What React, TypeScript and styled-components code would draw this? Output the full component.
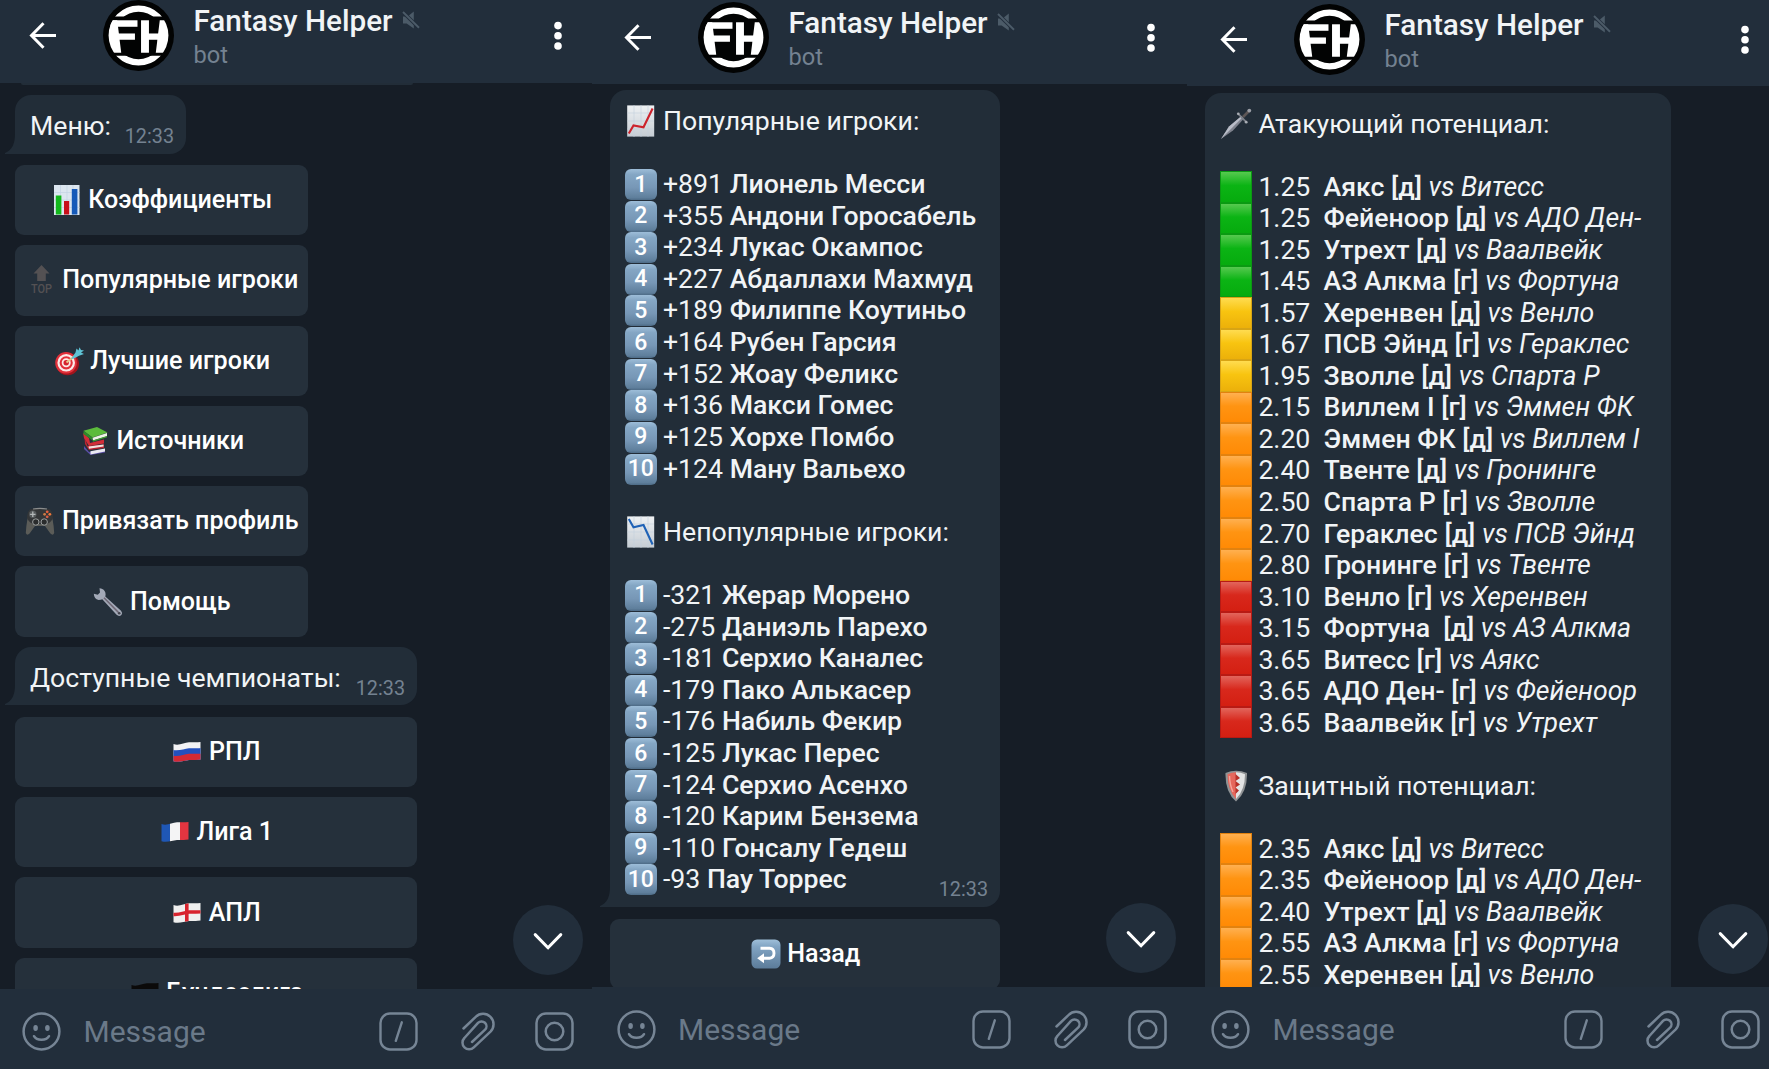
import React from "react";
import styled, { createGlobalStyle, css } from "styled-components";

const color = {
  chat: "#161d26",
  bar: "#222e3b",
  bubble: "#222d38",
  button: "#25303b",
  text: "#f1f4f6",
  muted: "#748291",
  icon: "#768595",
};

const Global = createGlobalStyle`
  * { box-sizing: border-box; }
  body { margin: 0; background: ${color.chat}; overflow: hidden; }
`;

/* ---------- layout ---------- */

const Screens = styled.main`
  display: grid;
  grid-template-columns: 592px 595px 582px;
  width: 1769px;
  height: 1069px;
  font-family: Roboto, "Noto Sans", sans-serif;
  color: ${color.text};
`;

const Phone = styled.section`
  display: flex;
  flex-direction: column;
  height: 1069px;
  min-width: 0;
  background: ${color.chat};
`;

const Header = styled.header<{ $h: number; $top: number; $inset: number; $right: number }>`
  display: flex;
  flex: none;
  align-items: flex-start;
  height: ${(p) => p.$h}px;
  padding: ${(p) => `${p.$top}px ${p.$right}px 0 ${p.$inset}px`};
  background: ${color.bar};
  svg { flex: none; display: block; }
`;

const BackArrow = styled.svg`
  margin-top: 21px;
`;

const Avatar = styled.svg`
  margin-left: 46px;
`;

const Who = styled.div`
  margin: 3.5px 0 0 19.5px;
  flex: 1;
`;

const TitleRow = styled.div`
  display: flex;
  align-items: flex-start;
`;

const Title = styled.h1`
  margin: 0;
  width: 200px;
  font-size: 29.7px;
  line-height: 34px;
  font-weight: 500;
  white-space: nowrap;
`;

const MuteIcon = styled.svg`
  margin: 7.5px 0 0 8px;
`;

const Status = styled.div`
  margin-top: 3.2px;
  font-size: 23.6px;
  line-height: 28px;
  color: ${color.muted};
`;

const Dots = styled.svg`
  margin-top: 21px;
`;

const Chat = styled.div<{ $left: number; $top?: number }>`
  position: relative;
  display: flex;
  flex-direction: column;
  align-items: flex-start;
  flex: 1;
  min-height: 0;
  overflow: hidden;
  padding: ${(p) => `${p.$top ?? 0}px 0 0 ${p.$left}px`};
`;

const PreviousEdge = styled.div`
  flex: none;
  width: 392px;
  height: 2px;
  margin: 0 0 10px 6px;
  border-radius: 0 0 4px 4px;
  background: ${color.bubble};
`;

const BubbleBox = styled.div<{ $w: number; $tail: boolean }>`
  position: relative;
  flex: none;
  width: ${(p) => p.$w}px;
  padding: 15px 12px 12px 15px;
  border-radius: ${(p) => (p.$tail ? "16px 16px 16px 0" : "16px 16px 0 0")};
  background: ${color.bubble};
`;

const TailShape = styled.svg`
  position: absolute;
  left: -10px;
  bottom: 0;
`;

const Line = styled.div<{ $h?: number }>`
  display: flex;
  align-items: center;
  height: ${(p) => p.$h ?? 31.62}px;
  font-size: 26.65px;
  line-height: ${(p) => p.$h ?? 31.62}px;
  white-space: pre;
  b { font-weight: 500; }
`;

const LineText = styled.span`
  margin: 1.6px 0 0;
`;

const Mark = styled.span`
  display: flex;
  flex: none;
  width: 32px;
  margin-right: 6px;
  svg { display: block; }
`;

const Time = styled.time`
  align-self: flex-end;
  margin: 0 0 -5.2px auto;
  font-size: 19.8px;
  line-height: 20px;
  color: ${color.muted};
`;

const KeycapBox = styled.span`
  display: flex;
  align-items: center;
  justify-content: center;
  width: 31.5px;
  height: 31px;
  margin-top: 1px;
  border-radius: 6px;
  background: linear-gradient(#9dbdd8 0, #84a6c4 18%, #7797b6 60%, #5f7f9c 92%, #4d6b86 100%);
  color: #fff;
  font-size: 23px;
  line-height: 30px;
  font-weight: 500;
`;

const Square = styled.span<{ $tone: Tone }>`
  width: 32px;
  height: 31.6px;
  ${(p) => {
    const [edge, top, mid, bottom] = squares[p.$tone];
    return css`
      border: 1px solid ${edge};
      background: linear-gradient(${top}, ${mid} 45%, ${bottom});
    `;
  }}
`;

const Keyboard = styled.div<{ $w: number }>`
  display: flex;
  flex: none;
  flex-direction: column;
  gap: 10px;
  width: ${(p) => p.$w}px;
  margin: 11.4px 0 10px;
`;

const Key = styled.button`
  display: flex;
  align-items: center;
  justify-content: center;
  gap: 6.5px;
  height: 70.3px;
  padding: 0 0 0 1px;
  border: 0;
  border-radius: 9px;
  background: ${color.button};
  color: #fff;
  font-family: inherit;
  font-size: 25.1px;
  font-weight: 500;
  line-height: 30px;
  white-space: nowrap;
  svg { flex: none; display: block; }
`;

const Fab = styled.button<{ $x: number; $bottom: number }>`
  position: absolute;
  left: ${(p) => p.$x}px;
  bottom: ${(p) => p.$bottom}px;
  display: flex;
  align-items: center;
  justify-content: center;
  width: 70px;
  height: 70px;
  padding: 2px 0 0;
  border: 0;
  border-radius: 50%;
  background: ${color.bar};
`;

const Composer = styled.footer<{ $h: number; $inset: number; $right: number; $top: number }>`
  display: flex;
  flex: none;
  align-items: center;
  height: ${(p) => p.$h}px;
  padding: ${(p) => `${p.$top}px ${p.$right}px 0 ${p.$inset}px`};
  background: ${color.bar};
  svg { flex: none; display: block; }
`;

const Placeholder = styled.span`
  flex: 1;
  margin: 2px 0 0 22.5px;
  font-size: 30px;
  line-height: 34px;
  color: #6a7989;
`;

const ComposerTools = styled.div`
  display: flex;
  align-items: center;
  svg:nth-child(2) { margin: 0 39.5px 0 43px; }
`;

/* ---------- icons ---------- */

const Logo = ({ id }: { id: string }) => (
  <Avatar width="71" height="71" viewBox="0 0 70 70">
    <defs>
      <clipPath id={`${id}-disc`}><circle cx="35" cy="35" r="29.5" /></clipPath>
      <clipPath id={`${id}-caps`}><path d="M0 0H70V16.2H0ZM0 55H70V70H0Z" /></clipPath>
    </defs>
    <circle cx="35" cy="35" r="35" fill="#020303" />
    <circle cx="35" cy="35" r="26.6" fill="none" stroke="#fff" strokeWidth="6.2" clipPath={`url(#${id}-caps)`} />
    <g clipPath={`url(#${id}-disc)`} fill="#fff">
      <rect x="6" y="20" width="28" height="6.4" />
      <rect x="12" y="33" width="19.5" height="6.2" />
      <g transform="translate(11 36) skewX(7)"><rect x="-6.5" y="-16" width="11.5" height="32" /></g>
      <rect x="37.5" y="20" width="7.8" height="32" />
      <rect x="44" y="33" width="14" height="6.2" />
      <g transform="translate(59 36) skewX(-7)"><rect x="-5" y="-16" width="11.5" height="32" /></g>
    </g>
  </Avatar>
);

const Back = () => (
  <BackArrow width="28" height="29" viewBox="0 0 28 29" fill="none" stroke="#fff" strokeWidth="3">
    <path d="M27 14.5H3M14.5 2.3L2.5 14.5L14.5 26.7" />
  </BackArrow>
);

const Muted = () => (
  <MuteIcon width="18" height="18" viewBox="0 0 18 18" fill="#4c5b68">
    <path d="M1 5.6V12.4H4.6L11.8 17.6V.6L6.3 5L5 5.6Z" />
    <path d="M0 .2L17.6 17.4" stroke={color.bar} strokeWidth="3.6" />
    <path d="M1 1L17 16.8" stroke="#4c5b68" strokeWidth="1.9" />
  </MuteIcon>
);

const More = () => (
  <Dots width="10" height="30" viewBox="0 0 10 30" fill="#fff">
    <circle cx="5" cy="4.6" r="3.8" />
    <circle cx="5" cy="14.8" r="3.8" />
    <circle cx="5" cy="25" r="3.8" />
  </Dots>
);

const Smile = () => (
  <svg width="39" height="39" viewBox="0 0 39 39" fill="none" stroke={color.icon} strokeWidth="2.5" strokeLinecap="round">
    <circle cx="19.5" cy="19.5" r="17.9" />
    <path d="M12 24.2C14.6 29 24.4 29 27 24.2" />
    <ellipse cx="13.6" cy="16" rx="2.3" ry="3" fill={color.icon} stroke="none" />
    <ellipse cx="25.4" cy="16" rx="2.3" ry="3" fill={color.icon} stroke="none" />
  </svg>
);

const Commands = () => (
  <svg width="39" height="39" viewBox="0 0 39 39" fill="none" stroke={color.icon} strokeWidth="2.4" strokeLinecap="round">
    <rect x="1.5" y="1.5" width="36" height="36" rx="9.5" />
    <path d="M22.8 10.3L16.8 28.8" />
  </svg>
);

const Clip = () => (
  <svg width="35" height="39" viewBox="0 0 35 39" fill="none" stroke={color.icon} strokeWidth="2.5" strokeLinecap="round" strokeLinejoin="round">
    <path d="M2.5 16.5L14.7 4.9A10.3 10.3 0 0 1 29.5 19.6L12.8 35.3A6.6 6.6 0 0 1 3.4 26L17 10.9A4.9 4.9 0 0 1 24.1 17.7L11 30" />
  </svg>
);

const Camera = () => (
  <svg width="39" height="39" viewBox="0 0 39 39" fill="none" stroke={color.icon} strokeWidth="2.5">
    <rect x="1.5" y="1.5" width="36" height="36" rx="9.5" />
    <circle cx="19.5" cy="19.5" r="8.8" />
  </svg>
);

const Down = () => (
  <svg width="30" height="20" viewBox="0 0 30 20" fill="none" stroke="#fff" strokeWidth="3" strokeLinecap="round" strokeLinejoin="round">
    <path d="M2.2 3.6L15 16.8L27.8 3.6" />
  </svg>
);

const Tail = () => (
  <TailShape width="11" height="20" viewBox="0 0 11 20">
    <path d="M11 0H10C10 10 7 16 0 19V20H11Z" fill={color.bubble} />
  </TailShape>
);

/* ---------- emoji drawings ---------- */

const BarChart = () => (
  <svg width="30" height="30" viewBox="0 0 30 30">
    <rect x="2" y="0" width="25.5" height="30" fill="#dce6f0" />
    <path d="M2 7.5H27.5M2 15H27.5M2 22.5H27.5M8.5 0V30M15 0V30M21 0V30" stroke="#c3d3e4" strokeWidth=".7" />
    <rect x="3.8" y="10.5" width="5.6" height="19" fill="#12b81c" />
    <rect x="12" y="16" width="5.2" height="13.5" fill="#c70f1a" />
    <rect x="19.8" y="4" width="5.6" height="25.5" fill="#1559b8" />
  </svg>
);

const TopArrow = () => (
  <svg width="30" height="30" viewBox="0 0 30 30" fill="#545153">
    <path d="M15.5 0L23.5 8.6H19.8V16H11.2V8.6H7.5Z" />
    <text x="15.5" y="27.6" textAnchor="middle" textLength="21" lengthAdjust="spacingAndGlyphs" fontFamily="Roboto, sans-serif" fontSize="12.8" fontWeight="500">TOP</text>
  </svg>
);

const Target = () => (
  <svg width="30" height="30" viewBox="0 0 30 30">
    <ellipse cx="13.5" cy="18" rx="11.5" ry="11.2" fill="#a3141c" />
    <circle cx="12" cy="16.8" r="10.8" fill="#e1303a" />
    <circle cx="12.2" cy="16.8" r="7.7" fill="none" stroke="#fbe9e7" strokeWidth="2.2" />
    <circle cx="12.2" cy="16.8" r="3.6" fill="#d5232e" stroke="#fbe9e7" strokeWidth="1.8" />
    <path d="M12.5 16.5L22 9" stroke="#e6c98b" strokeWidth="2" />
    <path d="M17 13L21.5 6.6L22.5 2.5L24.5 4.5L25.5 1.2L27 4L30 4.5L27 6.5L30 8L25 9.8L20 12.4Z" fill="#5fc3d6" />
  </svg>
);

const Books = () => (
  <svg width="30" height="30" viewBox="0 0 30 30">
    <path d="M4 20L9 26L25 23V26.5L10.5 29L4 23Z" fill="#5b4fa8" />
    <path d="M10.5 25.2L25 22.6V25.6L10.5 28.4Z" fill="#e9e9f2" />
    <path d="M4.5 11L7.5 20L24 18.5V22L9 24L5 18Z" fill="#bf2431" />
    <path d="M8.5 20.4L23.5 18.4V20.4L9 22.8Z" fill="#f3dfdd" />
    <path d="M3 7L9 12L10 17L24 13.5V17.5L9 20L4 12Z" fill="#d22d38" />
    <path d="M3.5 4.8L17 1L27.5 6.6L12.5 11.6Z" fill="#5cbb3c" />
    <path d="M3.5 4.8L12.5 11.6V14.6L3.5 8Z" fill="#2f8a2a" />
    <path d="M12.5 11.8L27 7V10.2L13 14.6Z" fill="#eef2e8" />
    <path d="M12.5 14.4L27 9.9V11.2L13 15.7Z" fill="#3f9e32" />
  </svg>
);

const Gamepad = () => (
  <svg width="30" height="30" viewBox="0 0 30 30">
    <path d="M5 6Q1.6 12 .8 27Q2 30 4.6 27.5L10 20H20L25.4 27.5Q28 30 29.2 27Q28.4 12 25 6Z" fill="#5b5c58" />
    <path d="M5 3.2Q15 1.4 25 3.2Q29 7 27.5 13Q25 18 20 18H10Q5 18 2.5 13Q1 7 5 3.2Z" fill="#343638" />
    <path d="M8 3Q15 1.8 22 3" stroke="#8b8d8d" strokeWidth="1.2" fill="none" />
    <circle cx="7.8" cy="8.3" r="3.7" fill="#55595b" />
    <path d="M7.8 5.6V11M5.1 8.3H10.5" stroke="#b3b7b8" strokeWidth="1.3" />
    <circle cx="22.2" cy="5.8" r="1.4" fill="#e5603c" />
    <circle cx="19.6" cy="8.3" r="1.4" fill="#cf7a44" />
    <circle cx="24.8" cy="8.3" r="1.4" fill="#f0773b" />
    <circle cx="22.2" cy="10.8" r="1.4" fill="#d95c45" />
    <circle cx="10.8" cy="16" r="3.2" fill="#2a2c2d" stroke="#9b9f9f" />
    <circle cx="19.2" cy="16" r="3.2" fill="#2a2c2d" stroke="#9b9f9f" />
  </svg>
);

const Wrench = () => (
  <svg width="30" height="30" viewBox="0 0 30 30">
    <path d="M6.5 1.2L7 5.6L4.8 7.8L.8 6.8Q1 12 5.6 13Q8 13 9.3 12.2L23.6 27.8Q26 30 28.4 28Q30 26 28 23.8L12.3 9.6Q13.4 5.6 10.6 2.8Q8.8 1.1 6.5 1.2Z" fill="#a3a9b7" />
    <path d="M11 10.8L25.5 25.5" stroke="#6d6673" strokeWidth="1.6" />
    <circle cx="26.2" cy="26.2" r="1.3" fill="#41414b" />
  </svg>
);

const wave = "M1.5 7C7 9 12 5.6 17 5.3C21 5.1 24 5.6 28.5 5V22.6C24 23.4 21 22.7 17 23C12 23.6 7 25.8 1.5 24.2Z";

const Flag = ({ id, children }: { id: string; children: React.ReactNode }) => (
  <svg width="30" height="30" viewBox="0 0 30 30">
    <defs><clipPath id={id}><path d={wave} /></clipPath></defs>
    <g clipPath={`url(#${id})`}>{children}</g>
  </svg>
);

const Russia = () => (
  <Flag id="flag-ru">
    <rect width="30" height="30" fill="#f2f2f4" />
    <path d="M0 12.8C7 14.6 12 11.4 17 11.2C21 11 24 11.4 30 10.8V30H0Z" fill="#2450bd" />
    <path d="M0 18.6C7 20.4 12 17 17 16.8C21 16.6 24 17 30 16.6V30H0Z" fill="#d32a34" />
  </Flag>
);

const France = () => (
  <Flag id="flag-fr">
    <rect width="10" height="30" fill="#1f57b5" />
    <rect x="10" width="10" height="30" fill="#f4f4f5" />
    <rect x="20" width="10" height="30" fill="#e33540" />
  </Flag>
);

const England = () => (
  <Flag id="flag-en">
    <rect width="30" height="30" fill="#efefef" />
    <path d="M0 16.3C7 17.6 12 14.4 17 14C21 13.8 24 14.2 30 13.8" stroke="#d8232e" strokeWidth="3.4" fill="none" />
    <rect x="13" width="3.6" height="30" fill="#d8232e" />
  </Flag>
);

const Germany = () => (
  <Flag id="flag-de">
    <rect width="30" height="30" fill="#0b0a0a" />
    <path d="M0 12.8C7 14.6 12 11.4 17 11.2C21 11 24 11.4 30 10.8V30H0Z" fill="#b3202a" />
    <path d="M0 18.6C7 20.4 12 17 17 16.8C21 16.6 24 17 30 16.6V30H0Z" fill="#f0bd2f" />
  </Flag>
);

const ReturnArrow = () => (
  <svg width="30" height="30" viewBox="0 0 30 30">
    <defs>
      <linearGradient id="return-fill" x2="0" y2="1">
        <stop stopColor="#9fbfd9" /><stop offset=".25" stopColor="#81a4c3" /><stop offset="1" stopColor="#5c7c9a" />
      </linearGradient>
    </defs>
    <rect x=".5" y=".5" width="29" height="29" rx="5.5" fill="url(#return-fill)" />
    <path d="M9.5 9.2H18.5Q23 9.6 23 14.2Q23 18.8 18.5 19.2H11" stroke="#fff" strokeWidth="2.9" fill="none" />
    <path d="M6.2 19.2L13 14.2V24.2Z" fill="#fff" />
  </svg>
);

const Trend = ({ up }: { up?: boolean }) => {
  const id = up ? "trend-up" : "trend-down";
  return (
    <svg width="32" height="32" viewBox="0 0 32 32">
      <defs>
        <linearGradient id={id} x2="0" y2="1">
          <stop stopColor="#eef1f3" /><stop offset="1" stopColor="#c6cdd4" />
        </linearGradient>
      </defs>
      <rect x="2.2" y=".4" width="27" height="31.2" fill={`url(#${id})`} />
      <path d="M2.2 8H29M2.2 16H29M2.2 24H29M9 0V32M16 0V32M23 0V32" stroke="#c5d2dd" strokeWidth=".6" />
      <path
        d={up ? "M3.8 28.5L8.5 20.5L18.5 22.3L27.6 3.5" : "M3.8 3L8.5 11.2L18.5 9L27.6 28.5"}
        fill="none"
        stroke={up ? "#cc222c" : "#1f62b6"}
        strokeWidth="2.1"
      />
    </svg>
  );
};

const Dagger = () => (
  <svg width="32" height="32" viewBox="0 0 32 32">
    <path d="M1 31L9 18.5L21.5 8L24 10.5L13 22.5Z" fill="#7e828d" />
    <path d="M1 31L22.6 9.2L21.5 8L9 18.5Z" fill="#b9bdc8" />
    <path d="M19 6.6L25.6 13.4" stroke="#7c8089" strokeWidth="1.8" strokeLinecap="round" />
    <path d="M23 9L29 3" stroke="#5d5656" strokeWidth="2.6" />
    <circle cx="29.3" cy="2.6" r="1.9" fill="#9b9ea6" />
    <circle cx="18.3" cy="5.8" r="1.4" fill="#a9adb4" />
    <circle cx="26.2" cy="14.2" r="1.4" fill="#a9adb4" />
  </svg>
);

const Shield = () => (
  <svg width="32" height="32" viewBox="0 0 32 32">
    <path d="M5.5 3Q16 -1.5 27 3Q27.5 22 16 31.5Q5 22 5.5 3Z" fill="#8f9294" />
    <path d="M7.5 4.2Q12 2.3 16 2.3V29Q7.6 20 7.5 4.2Z" fill="#e5675c" />
    <path d="M16 2.3Q21 2.3 25 4.2Q25 20 16 29Z" fill="#e3e4e4" />
    <path d="M15.5 4L20 8L15.5 11L20 14.5L15.5 17.5L19 20.5L15.5 24Z" fill="#b53029" />
    <path d="M9.5 6Q9.7 15 13 22" stroke="#f3a49b" strokeWidth="1.4" fill="none" />
  </svg>
);

/* ---------- data ---------- */

type Tone = "green" | "yellow" | "orange" | "red";

const squares: Record<Tone, [string, string, string, string]> = {
  green: ["#0a9a12", "#56c94f", "#0bb414", "#06ab0e"],
  yellow: ["#d8a414", "#ffdc50", "#f8c410", "#ecb00a"],
  orange: ["#e2820f", "#ffb050", "#ff9412", "#ff8a05"],
  red: ["#b81a14", "#e2655c", "#d8281c", "#d41f12"],
};

const menu: [React.ReactNode, string][] = [
  [<BarChart />, "Коэффициенты"],
  [<TopArrow />, "Популярные игроки"],
  [<Target />, "Лучшие игроки"],
  [<Books />, "Источники"],
  [<Gamepad />, "Привязать профиль"],
  [<Wrench />, "Помощь"],
];

const leagues: [React.ReactNode, string][] = [
  [<Russia />, "РПЛ"],
  [<France />, "Лига 1"],
  [<England />, "АПЛ"],
  [<Germany />, "Бундеслига"],
];

const popular: [string, string][] = [
  ["+891", "Лионель Месси"],
  ["+355", "Андони Горосабель"],
  ["+234", "Лукас Окампос"],
  ["+227", "Абдаллахи Махмуд"],
  ["+189", "Филиппе Коутиньо"],
  ["+164", "Рубен Гарсия"],
  ["+152", "Жоау Феликс"],
  ["+136", "Макси Гомес"],
  ["+125", "Хорхе Помбо"],
  ["+124", "Ману Вальехо"],
];

const unpopular: [string, string][] = [
  ["-321", "Жерар Морено"],
  ["-275", "Даниэль Парехо"],
  ["-181", "Серхио Каналес"],
  ["-179", "Пако Алькасер"],
  ["-176", "Набиль Фекир"],
  ["-125", "Лукас Перес"],
  ["-124", "Серхио Асенхо"],
  ["-120", "Карим Бензема"],
  ["-110", "Гонсалу Гедеш"],
  ["-93", "Пау Торрес"],
];

type Match = [Tone, string, string, string];

const attack: Match[] = [
  ["green", "1.25", "Аякс [д]", "Витесс"],
  ["green", "1.25", "Фейеноор [д]", "АДО Ден-"],
  ["green", "1.25", "Утрехт [д]", "Ваалвейк"],
  ["green", "1.45", "АЗ Алкма [г]", "Фортуна"],
  ["yellow", "1.57", "Херенвен [д]", "Венло"],
  ["yellow", "1.67", "ПСВ Эйнд [г]", "Гераклес"],
  ["yellow", "1.95", "Зволле [д]", "Спарта Р"],
  ["orange", "2.15", "Виллем I [г]", "Эммен ФК"],
  ["orange", "2.20", "Эммен ФК [д]", "Виллем I"],
  ["orange", "2.40", "Твенте [д]", "Гронинге"],
  ["orange", "2.50", "Спарта Р [г]", "Зволле"],
  ["orange", "2.70", "Гераклес [д]", "ПСВ Эйнд"],
  ["orange", "2.80", "Гронинге [г]", "Твенте"],
  ["red", "3.10", "Венло [г]", "Херенвен"],
  ["red", "3.15", "Фортуна  [д]", "АЗ Алкма"],
  ["red", "3.65", "Витесс [г]", "Аякс"],
  ["red", "3.65", "АДО Ден- [г]", "Фейеноор"],
  ["red", "3.65", "Ваалвейк [г]", "Утрехт"],
];

const defence: Match[] = [
  ["orange", "2.35", "Аякс [д]", "Витесс"],
  ["orange", "2.35", "Фейеноор [д]", "АДО Ден-"],
  ["orange", "2.40", "Утрехт [д]", "Ваалвейк"],
  ["orange", "2.55", "АЗ Алкма [г]", "Фортуна"],
  ["orange", "2.55", "Херенвен [д]", "Венло"],
];

/* ---------- parts ---------- */

const TopBar = (p: { id: string; h: number; top: number; inset: number; right: number }) => (
  <Header $h={p.h} $top={p.top} $inset={p.inset} $right={p.right}>
    <Back />
    <Logo id={p.id} />
    <Who>
      <TitleRow>
        <Title>Fantasy Helper</Title>
        <Muted />
      </TitleRow>
      <Status>bot</Status>
    </Who>
    <More />
  </Header>
);

const BottomBar = (p: { h: number; inset: number; right: number; top: number }) => (
  <Composer $h={p.h} $inset={p.inset} $right={p.right} $top={p.top}>
    <Smile />
    <Placeholder>Message</Placeholder>
    <ComposerTools>
      <Commands />
      <Clip />
      <Camera />
    </ComposerTools>
  </Composer>
);

const Bubble = ({ w, tail = true, children }: { w: number; tail?: boolean; children: React.ReactNode }) => (
  <BubbleBox $w={w} $tail={tail}>
    {children}
    {tail && <Tail />}
  </BubbleBox>
);

const Keys = ({ w, items }: { w: number; items: [React.ReactNode, string][] }) => (
  <Keyboard $w={w}>
    {items.map(([icon, label]) => (
      <Key key={label}>
        {icon}
        <span>{label}</span>
      </Key>
    ))}
  </Keyboard>
);

const Players = ({ rows, time }: { rows: [string, string][]; time?: string }) => (
  <>
    {rows.map(([delta, name], i) => (
      <Line key={name}>
        <Mark><KeycapBox>{i + 1}</KeycapBox></Mark>
        <LineText>{delta} <b>{name}</b></LineText>
        {time && i === rows.length - 1 && <Time>{time}</Time>}
      </Line>
    ))}
  </>
);

const MATCH_LINE = 31.53;

const Matches = ({ rows }: { rows: Match[] }) => (
  <>
    {rows.map(([tone, rate, team, rival], i) => (
      <Line key={i} $h={MATCH_LINE}>
        <Mark><Square $tone={tone} /></Mark>
        <LineText>{rate}{"  "}<b>{team}</b> <i>vs {rival}</i></LineText>
      </Line>
    ))}
  </>
);

export default function App() {
  return (
    <Screens>
      <Global />

      <Phone>
        <TopBar id="a" h={83} top={0} inset={29} right={29} />
        <Chat $left={15}>
          <PreviousEdge />
          <Bubble w={171}>
            <Line><LineText>Меню:</LineText><Time>12:33</Time></Line>
          </Bubble>
          <Keys w={293} items={menu} />
          <Bubble w={402}>
            <Line><LineText>Доступные чемпионаты:</LineText><Time>12:33</Time></Line>
          </Bubble>
          <Keys w={402} items={leagues} />
          <Fab $x={513} $bottom={14}><Down /></Fab>
        </Chat>
        <BottomBar h={80} inset={22} right={18} top={4} />
      </Phone>

      <Phone>
        <TopBar id="b" h={84} top={2} inset={32} right={31} />
        <Chat $left={18} $top={6}>
          <Bubble w={390}>
            <Line><Mark><Trend up /></Mark><LineText>Популярные игроки:</LineText></Line>
            <Line />
            <Players rows={popular} />
            <Line />
            <Line><Mark><Trend /></Mark><LineText>Непопулярные игроки:</LineText></Line>
            <Line />
            <Players rows={unpopular} time="12:33" />
          </Bubble>
          <Keys w={390} items={[[<ReturnArrow />, "Назад"]]} />
          <Fab $x={514} $bottom={14}><Down /></Fab>
        </Chat>
        <BottomBar h={82} inset={24.5} right={20} top={2} />
      </Phone>

      <Phone>
        <TopBar id="c" h={86} top={4} inset={33} right={19} />
        <Chat $left={18.4} $top={7}>
          <Bubble w={466} tail={false}>
            <Line $h={MATCH_LINE}><Mark><Dagger /></Mark><LineText>Атакующий потенциал:</LineText></Line>
            <Line $h={MATCH_LINE} />
            <Matches rows={attack} />
            <Line $h={MATCH_LINE} />
            <Line $h={MATCH_LINE}><Mark><Shield /></Mark><LineText>Защитный потенциал:</LineText></Line>
            <Line $h={MATCH_LINE} />
            <Matches rows={defence} />
          </Bubble>
          <Fab $x={511} $bottom={13}><Down /></Fab>
        </Chat>
        <BottomBar h={82} inset={24} right={9.5} top={2} />
      </Phone>
    </Screens>
  );
}
